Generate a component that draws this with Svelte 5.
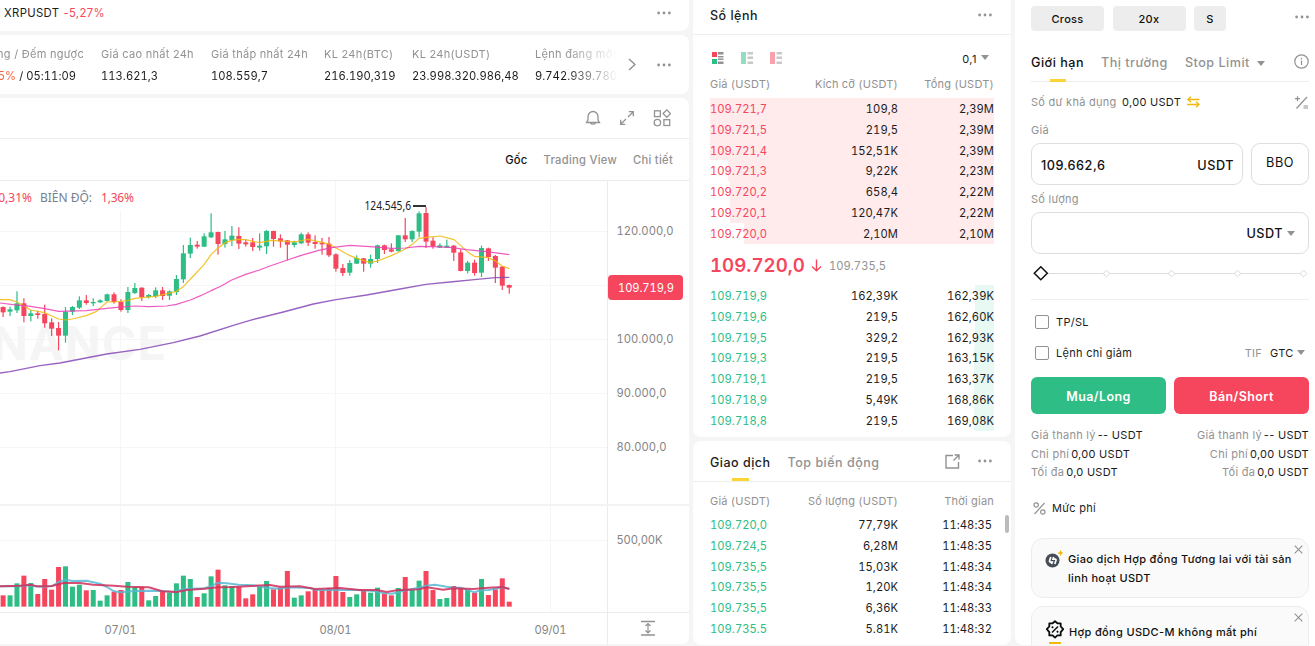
<script>
  // every candle: colour, body top, body bottom, wick top, wick bottom, volume top
  const candles = [
    ["r", 381, 397, 379, 411, 316], ["g", 388, 395, 380, 408, 316], ["g", 370, 391, 334, 399, 280],
    ["r", 370, 408, 355, 427, 257], ["g", 400, 408, 390, 424, 279], ["r", 400, 405, 392, 416, 312],
    ["r", 402, 430, 374, 443, 267], ["r", 427, 446, 415, 468, 299], ["r", 444, 467, 426, 511, 231],
    ["g", 395, 467, 381, 488, 229], ["g", 381, 395, 378, 405, 290], ["g", 361, 383, 349, 387, 284],
    ["r", 361, 369, 345, 374, 301], ["g", 366, 370, 355, 378, 300], ["g", 361, 367, 358, 369, 332],
    ["g", 343, 363, 341, 365, 316], ["r", 343, 366, 337, 371, 305], ["r", 366, 390, 358, 395, 300],
    ["g", 336, 390, 321, 399, 276], ["g", 324, 339, 309, 342, 291], ["r", 323, 352, 322, 363, 291],
    ["g", 345, 351, 342, 355, 331], ["g", 331, 349, 322, 354, 318], ["r", 331, 348, 321, 360, 305],
    ["g", 334, 347, 331, 360, 308], ["g", 297, 336, 285, 345, 280], ["g", 220, 298, 195, 309, 257],
    ["g", 195, 221, 173, 234, 267], ["r", 194, 200, 183, 206, 321], ["g", 169, 200, 160, 201, 310],
    ["g", 157, 172, 100, 174, 259], ["r", 156, 192, 155, 224, 239], ["g", 178, 192, 153, 203, 286],
    ["g", 167, 181, 138, 198, 288], ["r", 168, 191, 142, 207, 291], ["r", 187, 193, 178, 200, 325],
    ["r", 187, 201, 174, 213, 313], ["g", 197, 203, 160, 212, 290], ["g", 153, 199, 150, 222, 273],
    ["r", 153, 177, 152, 200, 298], ["r", 175, 184, 163, 203, 292], ["r", 181, 194, 180, 241, 243],
    ["g", 187, 195, 182, 202, 323], ["g", 163, 190, 158, 192, 316], ["r", 163, 188, 157, 198, 304],
    ["r", 186, 192, 166, 206, 300], ["r", 188, 193, 174, 224, 300], ["r", 191, 226, 171, 231, 294],
    ["r", 223, 266, 220, 275, 258], ["r", 264, 279, 252, 288, 306], ["g", 249, 278, 240, 287, 321],
    ["g", 234, 251, 226, 252, 313], ["r", 235, 251, 234, 275, 301], ["g", 237, 251, 224, 263, 308],
    ["g", 196, 237, 194, 249, 293], ["r", 196, 210, 194, 222, 311], ["r", 208, 215, 190, 217, 316],
    ["g", 166, 213, 165, 215, 294], ["r", 166, 178, 114, 186, 261], ["g", 153, 178, 151, 186, 300],
    ["g", 100, 155, 94, 172, 272], ["r", 99, 185, 81, 204, 243], ["r", 182, 199, 172, 206, 300],
    ["g", 196, 203, 190, 204, 327], ["g", 197, 203, 179, 204, 324], ["r", 197, 218, 195, 243, 288],
    ["r", 217, 273, 208, 274, 294], ["g", 248, 273, 243, 280, 298], ["r", 248, 279, 239, 287, 308],
    ["g", 204, 278, 197, 291, 267], ["r", 205, 231, 203, 243, 315], ["r", 228, 263, 225, 309, 298],
    ["r", 260, 317, 258, 330, 265], ["r", 315, 323, 314, 341, 335],
  ];
  const colors = { r: "#f6465d", g: "#2ebd85" };
  const cx = (i) => 9.3 + i * 20.8;

  const ma7 =
    "0,359 30,359 51,366 71,377 92,390 134,398 155,408 176,417 197,420 217,417 259,407 290,394 321,366 342,366 383,362 404,355 467,349 529,334 550,320 580,288 612,254 633,224 654,204 675,188 695,181 716,178 737,179 778,188 815,181 870,185 890,185 912,180 925,178 967,187 987,192 1008,204 1050,227 1081,239 1110,247 1133,243 1174,227 1216,207 1237,193 1257,175 1278,172 1320,168 1362,179 1402,215 1423,229 1465,233 1486,243 1506,258 1528,266";
  const ma25 =
    "0,369 40,374 92,379 134,386 176,394 259,392 342,383 404,378 446,380 500,378 529,373 571,360 602,347 633,332 664,318 695,300 737,283 778,270 810,258 862,240 904,226 956,211 1000,202 1050,196 1110,200 1175,205 1216,204 1257,199 1300,200 1350,202 1400,209 1460,215 1528,224";
  const ma99 =
    "0,579 30,575 120,557 180,549 320,522 420,508 520,488 600,468 700,436 750,421 850,396 940,372 1008,359 1100,345 1200,327 1278,313 1350,306 1423,299 1486,293 1528,292";
  const volFast =
    "0,289 60,289 80,286 120,290 155,289 176,276 197,269 217,273 260,272 300,281 321,291 342,304 362,307 404,303 446,302 487,303 520,306 550,298 571,296 613,295 633,289 654,278 680,280 716,284 758,286 780,289 800,294 840,296 870,292 930,294 950,300 1020,299 1070,300 1120,303 1150,309 1175,311 1195,307 1216,301 1257,293 1278,287 1305,284 1340,290 1361,293 1382,293 1403,300 1423,307 1444,301 1465,300 1486,296 1507,292 1528,296";
  const volSlow =
    "0,289 60,287 92,284 110,289 155,288 190,279 240,279 280,284 342,287 383,290 446,292 487,304 530,306 560,300 613,296 654,292 700,291 810,285 840,290 900,289 945,297 1020,294 1080,300 1130,300 1160,306 1190,301 1257,298 1280,292 1330,299 1361,295 1420,297 1465,293 1507,291 1528,297";

  const stats = [
    ["Giá cao nhất 24h", "113.621,3"],
    ["Giá thấp nhất 24h", "108.559,7"],
    ["KL 24h(BTC)", "216.190,319"],
    ["KL 24h(USDT)", "23.998.320.986,48"],
    ["Lệnh đang mở(USDT)", "9.742.939.780,21"],
  ];
  const asks = [
    ["109.721,7", "109,8", "2,39M", 100],
    ["109.721,5", "219,5", "2,39M", 100],
    ["109.721,4", "152,51K", "2,39M", 100],
    ["109.721,3", "9,22K", "2,23M", 93.6],
    ["109.720,2", "658,4", "2,22M", 93.1],
    ["109.720,1", "120,47K", "2,22M", 93],
    ["109.720,0", "2,10M", "2,10M", 88],
  ];
  const bids = [
    ["109.719,9", "162,39K", "162,39K", 6.8],
    ["109.719,6", "219,5", "162,60K", 6.8],
    ["109.719,5", "329,2", "162,93K", 6.8],
    ["109.719,3", "219,5", "163,15K", 6.9],
    ["109.719,1", "219,5", "163,37K", 6.9],
    ["109.718,9", "5,49K", "168,86K", 7.1],
    ["109.718,8", "219,5", "169,08K", 7.1],
  ];
  const trades = [
    ["109.720,0", "77,79K", "11:48:35"],
    ["109.724,5", "6,28M", "11:48:35"],
    ["109.735,5", "15,03K", "11:48:34"],
    ["109.735,5", "1,20K", "11:48:34"],
    ["109.735,5", "6,36K", "11:48:33"],
    ["109.735.5", "5.81K", "11:48:32"],
  ];
  const info = [
    ["Giá thanh lý", "-- USDT"],
    ["Chi phí", "0,00 USDT"],
    ["Tối đa", "0,0 USDT"],
  ];
</script>

{#snippet dots()}
  <svg class="dots" width="16" height="4" viewBox="0 0 16 4">
    <circle cx="2.6" cy="2" r="1.4" /><circle cx="8" cy="2" r="1.4" /><circle cx="13.4" cy="2" r="1.4" />
  </svg>
{/snippet}

{#snippet caret()}
  <svg class="caret" width="8" height="7" viewBox="0 0 8 7"><path d="M0 0h8L4 5z" /></svg>
{/snippet}

{#snippet close()}
  <svg class="close" width="9" height="9" viewBox="0 0 9 9"><path d="M.7.7l7.6 7.6M8.3.7L.7 8.3" /></svg>
{/snippet}

{#snippet bookRow(row, side)}
  <div class="row {side}">
    <i class="depth" style="width: {row[3]}%"></i>
    <span class="price">{row[0]}</span>
    <span>{row[1]}</span>
    <span>{row[2]}</span>
  </div>
{/snippet}

<div class="Page">
  <div class="Left">
    <div class="card ticker">
      <span class="pair">XRPUSDT</span>
      <span class="down">-5,27%</span>
      <span class="push">{@render dots()}</span>
    </div>

    <div class="card stats">
      <div class="stats-list">
        <div class="stat funding">
          <span class="label">Funding / Đếm ngược</span>
          <span class="value"><b>0,00375%</b> / 05:11:09</span>
        </div>
        {#each stats as [label, value]}
          <div class="stat">
            <span class="label">{label}</span>
            <span class="value">{value}</span>
          </div>
        {/each}
      </div>
      <svg class="next" width="8" height="13" viewBox="0 0 8 13"><path d="M1 1l6 5.5L1 12" /></svg>
      {@render dots()}
    </div>

    <div class="card chart">
      <div class="toolbar">
        <svg width="16" height="16" viewBox="0 0 16 16">
          <path d="M1.5 12.5L3 10V6.5a5 5 0 0 1 10 0V10l1.5 2.5z" />
          <path d="M5.5 12.7a2.6 2 0 0 0 5 0" />
        </svg>
        <svg width="16" height="16" viewBox="0 0 16 16">
          <path d="M9.8 1.7h4.5v4.5M14.3 1.7L9 7M6.2 14.3H1.7V9.8M1.7 14.3L7 9" />
        </svg>
        <svg width="18" height="18" viewBox="0 0 18 18">
          <rect x="1.5" y="1.8" width="5.8" height="5.8" /><path d="M13.8.9l3.700 3.700-3.700 3.700-3.700-3.700z" />
          <circle cx="4.4" cy="13.6" r="3.2" /><rect x="10.9" y="10.7" width="5.8" height="5.8" />
        </svg>
      </div>
      <div class="views">
        <span class="active">Gốc</span>
        <span>Trading View</span>
        <span>Chi tiết</span>
      </div>
      <svg class="plot" width="689" height="465" viewBox="0 180 689 465">
        <g class="grid">
          <path d="M0 231.5H607M0 285.5H607M0 339.5H607M0 393.5H607M0 447.5H607M0 540.5H607" />
          <path d="M120.5 211V612M335.5 181V612M550.5 181V612" />
        </g>
        <text class="watermark" x="167" y="360" text-anchor="end">BINANCE</text>
        <g class="lines">
          <path d="M0 180.5H689M0 612.5H689M607.5 181V645M0 645H689" />
          <path class="thick" d="M0 505H689" />
        </g>

        <g transform="translate(0 180) scale(.33333)">
          {#each candles as c, i}
            <rect x={cx(i) - 1.8} y={c[3]} width="3.6" height={c[4] - c[3]} fill={colors[c[0]]} />
            <rect x={cx(i) - 7.5} y={c[1]} width="15" height={c[2] - c[1]} fill={colors[c[0]]} />
          {/each}
          <polyline points={ma7} stroke="#f0b90b" />
          <polyline points={ma25} stroke="#eb40b5" />
          <polyline class="slow" points={ma99} stroke="#8648b5" />
        </g>
        <g transform="translate(0 490) scale(.33333)">
          {#each candles as c, i}
            <rect x={cx(i) - 7.5} y={c[5]} width="15" height={350 - c[5]} fill={colors[c[0]]} />
          {/each}
          <polyline class="vol" points={volFast} stroke="#57b9d3" />
          <polyline class="vol" points={volSlow} stroke="#d02f5c" />
        </g>

        <g class="legend">
          <text x="32" y="202" text-anchor="end" fill="#f6465d">0,31%</text>
          <text x="40" y="202" textLength="52">BIÊN ĐỘ:</text>
          <text x="101" y="202" textLength="33" fill="#f6465d">1,36%</text>
          <text class="peak" x="364.5" y="210" textLength="46.5" lengthAdjust="spacingAndGlyphs">124.545,6</text>
        </g>
        <path d="M413 206H426" stroke="#333" stroke-width="1.8" />
        <g class="axis">
          <text x="616.5" y="235" textLength="57">120.000,0</text>
          <text x="616.5" y="343" textLength="57">100.000,0</text>
          <text x="616.5" y="397" textLength="50">90.000,0</text>
          <text x="616.5" y="451" textLength="50">80.000,0</text>
          <text x="616.5" y="543.5" textLength="46">500,00K</text>
          <text x="104.5" y="634" textLength="32">07/01</text>
          <text x="319.5" y="634" textLength="32">08/01</text>
          <text x="534.5" y="634" textLength="32">09/01</text>
        </g>
        <rect x="608" y="275" width="75" height="25" rx="4" fill="#f6465d" />
        <text class="last" x="618" y="291.5" textLength="56">109.719,9</text>
        <path class="fit" d="M641 621.5h14M641 635h14" />
        <path class="fit thin" d="M648 623.5v9.500M645.500 626l2.500-2.500 2.500 2.500M645.500 630.500l2.500 2.500 2.500-2.500" />
      </svg>
    </div>
  </div>

  <div class="Middle">
    <div class="card book">
      <div class="head">
        <span class="title">Sổ lệnh</span>
        {@render dots()}
      </div>
      <div class="modes">
        <svg width="12" height="12" viewBox="0 0 12 12">
          <path fill="#f6465d" d="M0 0h5v5H0z" /><path fill="#2ebd85" d="M0 7h5v5H0z" />
          <path fill="#929292" d="M6 0h5.500v2.500H6zM6 4h5.500v1.500H6zM6 6.500h5.500V8H6zM6 9.500h5.500V12H6z" />
        </svg>
        <svg width="12" height="12" viewBox="0 0 12 12" opacity=".5">
          <path fill="#2ebd85" d="M0 0h5v12H0z" />
          <path fill="#929292" d="M6.500 0H12v2.500H6.500zM6.500 4.500H12V7H6.500zM6.500 9.500H12V12H6.500z" />
        </svg>
        <svg width="12" height="12" viewBox="0 0 12 12" opacity=".5">
          <path fill="#f6465d" d="M0 0h5v12H0z" />
          <path fill="#929292" d="M6.500 0H12v2.500H6.500zM6.500 4.500H12V7H6.500zM6.500 9.500H12V12H6.500z" />
        </svg>
        <span class="tick">0,1 {@render caret()}</span>
      </div>
      <div class="row names">
        <span>Giá (USDT)</span><span>Kích cỡ (USDT)</span><span>Tổng (USDT)</span>
      </div>
      <div class="asks">
        {#each asks as row}{@render bookRow(row, "ask")}{/each}
      </div>
      <div class="market">
        <strong>109.720,0</strong>
        <svg width="11" height="13" viewBox="0 0 11 13"><path d="M5.500.5v11M1 7.500l4.500 4.300L10 7.500" /></svg>
        <span>109.735,5</span>
      </div>
      {#each bids as row}{@render bookRow(row, "bid")}{/each}
    </div>

    <div class="card trades">
      <div class="head">
        <span class="title tab">Giao dịch</span>
        <span class="title muted">Top biến động</span>
        <svg class="share" width="15" height="15" viewBox="0 0 15 15">
          <path d="M8 1.500H1v12.500h12.500V8M9.500 1h4.500v4.500M14 1L8.500 6.500" />
        </svg>
        {@render dots()}
      </div>
      <div class="row names">
        <span>Giá (USDT)</span><span>Số lượng (USDT)</span><span>Thời gian</span>
      </div>
      <div class="trade-list">
        {#each trades as [price, size, time]}
          <div class="row bid">
            <span class="price">{price}</span><span>{size}</span><span class="time">{time}</span>
          </div>
        {/each}
        <i class="scroll"></i>
      </div>
    </div>
  </div>

  <div class="Right">
    <div class="margin">
      <button class="wide">Cross</button>
      <button class="wide">20x</button>
      <button>S</button>
      <span class="push">{@render dots()}</span>
    </div>
    <div class="types">
      <span class="active">Giới hạn</span>
      <span>Thị trường</span>
      <span class="stop">Stop Limit</span>
      {@render caret()}
      <svg class="info-icon" width="15" height="15" viewBox="0 0 15 15">
        <circle cx="7.5" cy="7.5" r="6.7" /><path d="M7.5 6.5V11M7.5 4v1.4" />
      </svg>
    </div>
    <div class="balance">
      <span class="muted">Số dư khả dụng</span>
      <span>0,00 USDT</span>
      <svg width="13" height="12" viewBox="0 0 13 12">
        <path d="M4 .7L1 3.5h11.500M4 6.200L1 3.500M0 8.500h12M9 5.800l3 2.700-3 2.800" />
      </svg>
      <svg class="calc" width="14" height="13" viewBox="0 0 14 13">
        <path d="M12 1L1.500 12.500M0 2.700h5M2.500.2v5M8.500 10h4.500M8.500 12h4.500" />
      </svg>
    </div>
    <div class="field-label">Giá</div>
    <div class="price-line">
      <div class="field"><span>109.662,6</span><span>USDT</span></div>
      <div class="field bbo">BBO</div>
    </div>
    <div class="field-label amount">Số lượng</div>
    <div class="field qty"><span></span><span>USDT {@render caret()}</span></div>
    <svg class="slider" width="278" height="16" viewBox="0 0 278 16">
      <path class="rail" d="M17 8.500H272" />
      {#each [75.5, 140.5, 206.5, 272.5] as x}
        <path class="stop-point" d="M{x} 5.200l3.300 3.300-3.300 3.300-3.300-3.300z" />
      {/each}
      <path class="thumb" d="M9.800 1.700l6.500 6.500-6.500 6.500-6.500-6.500z" />
    </svg>
    <div class="check top"><i></i>TP/SL</div>
    <div class="check">
      <i></i>Lệnh chỉ giảm
      <span class="tif"><em>TIF</em>GTC {@render caret()}</span>
    </div>
    <div class="actions">
      <button class="buy">Mua/Long</button>
      <button class="sell">Bán/Short</button>
    </div>
    <div class="infos">
      {#each [0, 1] as side}
        <div class:end={side === 1}>
          {#each info as [label, value]}
            <p><span>{label}</span>{value}</p>
          {/each}
        </div>
      {/each}
    </div>
    <div class="fee">
      <svg width="13" height="13" viewBox="0 0 13 13">
        <path d="M11.500 1L1.500 12" /><circle cx="3.2" cy="3" r="2.2" /><circle cx="9.8" cy="10" r="2.2" />
      </svg>
      Mức phí
    </div>
    <div class="notice">
      <svg width="18" height="18" viewBox="0 0 18 18">
        <circle cx="7.5" cy="10.5" r="7" fill="#474d57" />
        <path
          d="M5.800 7L4.600 10.800c-.2.900.2 1.300 1 1.300h1.700L6.500 14M8.700 7L8 9.100h2c.9 0 1.200.5 1 1.200L9.800 14"
          fill="none" stroke="#fff" stroke-width="1.7" />
        <path d="M15.500 0l1 2 2 1-2 1-1 2-1-2-2-1 2-1z" fill="#f0b90b" />
      </svg>
      <p>Giao dịch Hợp đồng Tương lai với tài sản linh hoạt USDT</p>
      {@render close()}
    </div>
    <div class="notice second">
      <svg width="20" height="26" viewBox="0 0 20 26">
        <path
          d="M10 1.300l2.400 2h3.300v3.200l2.500 2.700-2.500 3v3.200h-3.300l-2.400 2.200-2.400-2.200H4.300v-3.200l-2.500-3 2.500-2.700V3.300h3.300z"
          fill="none" stroke="#0b0b0b" stroke-width="1.8" stroke-linejoin="round" />
        <path d="M13 6.500l-6 6" stroke="#0b0b0b" stroke-width="1.4" />
        <path d="M7.500 5.900l1.300 1.300-1.300 1.300-1.300-1.300zM12.500 10.500l1.300 1.300-1.300 1.300-1.300-1.300z" fill="#0b0b0b" />
        <path d="M4 23h12" stroke="#f0b90b" stroke-width="2" />
      </svg>
      <p>Hợp đồng USDC-M không mất phí</p>
      {@render close()}
    </div>
  </div>
</div>

<style>
  :global(body) {
    margin: 0;
    overflow: hidden;
  }

  .Page {
    width: 1315px;
    height: 646px;
    overflow: hidden;
    display: grid;
    grid-template-columns: 689px 318px 300px;
    gap: 4px;
    background: linear-gradient(to right, #f5f5f5 1309px, #fff 1309px);
    color: #1c1c1c;
    font-family: Inter, "Noto Sans", sans-serif;
    font-size: 11px;
    letter-spacing: 0.28px;
  }

  .Page * {
    box-sizing: border-box;
  }

  .Left,
  .Middle {
    display: flex;
    flex-direction: column;
    gap: 4px;
    height: 645px;
    min-width: 0;
  }

  .card {
    background: #fff;
    border-radius: 8px;
    overflow: hidden;
  }

  .Left .card {
    border-top-left-radius: 0;
    border-bottom-left-radius: 0;
  }

  svg {
    flex: none;
  }

  .dots {
    fill: #929292;
  }

  .caret {
    fill: #929292;
  }

  .push {
    margin-left: auto;
    display: flex;
  }

  .down {
    color: #f6465d;
  }

  .ticker {
    height: 31px;
    display: flex;
    align-items: center;
    gap: 4px;
    padding: 0 17px 5px 4px;
    font-size: 11.3px;
    letter-spacing: 0.35px;
  }

  .Left .ticker {
    border-top-right-radius: 0;
  }

  .stats {
    height: 59px;
    display: flex;
    align-items: center;
    padding-right: 17px;
  }

  .stats-list {
    width: 616px;
    display: grid;
    grid-template-columns: 84px 93px 96px 71px 106px 120px;
    column-gap: 17px;
    overflow: hidden;
    white-space: nowrap;
    mask-image: linear-gradient(to right, #000 565px, transparent 618px);
  }

  .stat {
    display: flex;
    flex-direction: column;
    line-height: 22px;
  }

  .stat .value {
    font-size: 11.2px;
    letter-spacing: 0.03px;
    font-variant-numeric: tabular-nums;
  }

  .funding {
    align-items: flex-end;
  }

  .funding .value {
    padding-right: 8px;
  }

  .funding b {
    font-weight: 400;
    color: #f6653e;
  }

  .label,
  .muted {
    color: #929292;
  }

  .next {
    margin: 0 20px 0 12px;
    fill: none;
    stroke: #929292;
    stroke-width: 1.5;
  }

  .chart {
    flex: 1;
  }

  .toolbar {
    height: 41px;
    border-bottom: 1px solid #eee;
    display: flex;
    align-items: center;
    justify-content: flex-end;
    gap: 18px;
    padding-right: 18px;
  }

  .toolbar svg {
    fill: none;
    stroke: #929292;
    stroke-width: 1.3;
  }

  .views {
    height: 41px;
    display: flex;
    align-items: center;
    justify-content: flex-end;
    gap: 16px;
    padding: 1px 16px 0 0;
    color: #929292;
    font-size: 11.2px;
    font-weight: 500;
    letter-spacing: 0.28px;
  }

  .views .active {
    color: #111;
  }

  .plot {
    display: block;
    letter-spacing: 0;
  }

  .grid path {
    stroke: #f6f6f6;
  }

  .lines path {
    stroke: #ebebeb;
  }

  .lines .thick {
    stroke: #f3f3f3;
    stroke-width: 2;
  }

  .watermark {
    font-size: 47px;
    font-weight: 700;
    letter-spacing: 1px;
    fill: #f5f5f5;
  }

  polyline {
    fill: none;
    stroke-width: 3.6;
    stroke-linejoin: round;
    opacity: 0.85;
  }

  polyline.slow {
    stroke-width: 4.2;
  }

  polyline.vol {
    stroke-width: 6;
  }

  .legend text {
    font: 12px "Noto Sans", sans-serif;
  }

  .legend text:not([fill]) {
    fill: #76808f;
  }

  .legend text.peak {
    fill: #222;
  }

  .axis text {
    font-size: 11.2px;
    font-variant-numeric: tabular-nums;
    fill: #848484;
  }

  .last {
    fill: #fff;
    font-size: 11.2px;
    font-variant-numeric: tabular-nums;
  }

  .fit {
    fill: none;
    stroke: #929292;
    stroke-width: 1.5;
  }

  .thin {
    stroke-width: 1.2;
  }

  .book {
    height: 437px;
    border-top-left-radius: 0;
    border-top-right-radius: 0;
  }

  .head {
    display: flex;
    align-items: center;
    height: 35px;
    padding: 0 18px 5px 17px;
    border-bottom: 1px solid #eee;
    justify-content: space-between;
  }

  .head .title {
    padding-top: 1px;
  }

  .title {
    font-size: 12.5px;
    font-weight: 500;
    letter-spacing: 0.5px;
  }

  .modes {
    display: flex;
    align-items: center;
    height: 38px;
    padding: 8px 22px 0 19px;
    gap: 17px;
  }

  .tick {
    margin-left: auto;
    padding-top: 1px;
    display: flex;
    align-items: center;
    gap: 4px;
    letter-spacing: 0.5px;
  }

  .row {
    position: relative;
    display: grid;
    grid-template-columns: 94px 94px 96px;
    height: 20.8px;
    margin: 0 17px;
    line-height: 22px;
    text-align: right;
    white-space: nowrap;
    font-size: 11.2px;
    letter-spacing: 0.03px;
    font-variant-numeric: tabular-nums;
  }

  .row span {
    position: relative;
  }

  .row span:first-child,
  .row .price {
    text-align: left;
  }

  .names {
    color: #929292;
    height: 25px;
    font-size: 11px;
    letter-spacing: 0.2px;
  }

  .depth {
    position: absolute;
    top: 0;
    right: 0;
    height: 100%;
    background: #ffeaec;
  }

  .bid .depth {
    background: #e8f8f2;
  }

  .ask .price {
    color: #f6465d;
  }

  .bid .price {
    color: #2ebd85;
  }

  .market {
    height: 41.5px;
    display: flex;
    align-items: center;
    padding: 3px 17px 0;
    gap: 6.5px;
    color: #929292;
    font-size: 11.2px;
    letter-spacing: 0.03px;
    font-variant-numeric: tabular-nums;
  }

  .market strong {
    font-size: 18.7px;
    font-weight: 600;
    color: #f6465d;
  }

  .market svg {
    fill: none;
    stroke: #f6465d;
    stroke-width: 1.4;
  }

  .trades {
    flex: 1;
  }

  .trades .head {
    height: 41px;
    padding-bottom: 0;
    justify-content: flex-start;
    gap: 17px;
  }

  .trades .title.tab {
    align-self: stretch;
    line-height: 42px;
    background: linear-gradient(#fcd535, #fcd535) 50% 100% / 17px 3px no-repeat;
  }

  .share {
    margin-left: auto;
    fill: none;
    stroke: #929292;
    stroke-width: 1.4;
  }

  .title.muted {
    color: #929292;
    padding-top: 2px;
  }

  .trades .names {
    margin-top: 8px;
    height: 24px;
  }

  .time {
    padding-right: 2px;
  }

  .trade-list {
    position: relative;
  }

  .scroll {
    position: absolute;
    right: 2px;
    top: 1px;
    width: 4px;
    height: 18px;
    border-radius: 2px;
    background: #bbb;
  }

  .Right {
    background: #fff;
    height: 645px;
    overflow: hidden;
    border-bottom-left-radius: 8px;
    padding: 6px 6px 0 16px;
    display: flex;
    flex-direction: column;
  }

  .margin {
    display: flex;
    gap: 8.5px;
    height: 25px;
    flex: none;
  }

  button {
    border: 0;
    border-radius: 4px;
    padding: 0;
    width: 32px;
    background: #ededed;
    font: 500 11px Inter, sans-serif;
    letter-spacing: 0.28px;
    color: #111;
  }

  .margin .wide {
    width: 73px;
  }

  .margin .push {
    margin-top: 9px;
    margin-right: -1px;
  }

  .types {
    height: 51px;
    flex: none;
    border-bottom: 1px solid #eee;
    display: flex;
    align-items: center;
    font-size: 12.6px;
    font-weight: 500;
    letter-spacing: 0.5px;
    color: #929292;
    padding-top: 11px;
  }

  .types span {
    margin-right: 17px;
    padding-top: 1px;
    line-height: 39px;
  }

  .types .active {
    color: #111;
    background: linear-gradient(#fcd535, #fcd535) 50% 100% / 16px 3px no-repeat;
  }

  .types .stop {
    margin-right: 7px;
  }

  .types .caret {
    margin-top: 6px;
  }

  .info-icon {
    margin-left: auto;
    fill: none;
    stroke: #929292;
    stroke-width: 1.2;
  }

  .balance {
    height: 40px;
    flex: none;
    display: flex;
    align-items: center;
    gap: 5.5px;
  }

  .balance svg {
    fill: none;
    stroke: #f0b90b;
    stroke-width: 1.3;
  }

  .balance .calc {
    margin-left: auto;
    stroke: #929292;
    stroke-width: 1.2;
  }

  .field-label {
    flex: none;
    height: 21px;
    line-height: 16px;
    color: #929292;
  }

  .price-line {
    display: flex;
    gap: 8px;
    flex: none;
  }

  .field {
    flex: 1;
    height: 42px;
    border: 1px solid #dedede;
    border-radius: 9px;
    display: flex;
    align-items: center;
    justify-content: space-between;
    padding: 2px 8px 0 9px;
    font-size: 12.7px;
    font-weight: 500;
    letter-spacing: 0.5px;
    color: #111;
  }

  .field.bbo {
    flex: 0 0 58px;
    justify-content: center;
    padding: 0 0 3px;
    font-weight: 400;
  }

  .amount {
    margin-top: 6px;
  }

  .field.qty {
    flex: none;
    padding-right: 13px;
    padding-top: 0;
  }

  .slider {
    margin-top: 11px;
    fill: #fff;
  }

  .rail {
    stroke: #dedede;
  }

  .stop-point {
    stroke: #d8d8d8;
  }

  .thumb {
    stroke: #111;
    stroke-width: 1.5;
  }

  .check {
    flex: none;
    height: 31px;
    display: flex;
    align-items: center;
    padding-left: 4px;
    gap: 7px;
  }

  .check.top {
    margin-top: 18px;
    border-top: 1px solid #eee;
    height: 38px;
    padding-top: 6px;
  }

  .check i {
    width: 14px;
    height: 14px;
    border: 1px solid #929292;
    border-radius: 2px;
  }

  .tif {
    margin-left: auto;
    padding-right: 4px;
  }

  .tif em {
    font-style: normal;
    color: #929292;
    margin-right: 8px;
  }

  .actions {
    flex: none;
    margin-top: 9px;
    display: flex;
    gap: 8px;
  }

  .actions button {
    flex: 1;
    height: 37px;
    color: #fff;
    font-size: 12.5px;
    font-weight: 600;
    letter-spacing: 0.4px;
    padding-top: 2px;
    border-radius: 6px;
  }

  .actions .buy {
    background: #2ebd85;
  }

  .actions .sell {
    background: #f6465d;
  }

  .infos {
    flex: none;
    display: flex;
    justify-content: space-between;
    padding-top: 12px;
  }

  .infos p {
    margin: 0;
    line-height: 18.5px;
  }

  .infos p span {
    color: #929292;
    margin-right: 2px;
  }

  .infos .end {
    text-align: right;
  }

  .fee {
    flex: none;
    height: 54px;
    display: flex;
    align-items: center;
    gap: 6px;
    padding: 0 0 1px 2px;
  }

  .fee svg {
    fill: none;
    stroke: #929292;
    stroke-width: 1.2;
  }

  .notice {
    position: relative;
    flex: none;
    height: 60px;
    margin-top: 2px;
    border: 1px solid #ececec;
    border-radius: 12px;
    background: #fafafa;
    display: flex;
    padding: 11px 4px 0 13px;
    gap: 5px;
    font-weight: 500;
    letter-spacing: 0.34px;
    color: #111;
  }

  .notice p {
    margin: 0;
    line-height: 19px;
    width: 232px;
  }

  .notice .close {
    position: absolute;
    right: 5px;
    top: 6px;
    stroke: #929292;
    stroke-width: 1.1;
  }

  .second {
    margin-top: 8px;
    padding-top: 13px;
    gap: 4px;
  }

  .second p {
    line-height: 24px;
  }
</style>
